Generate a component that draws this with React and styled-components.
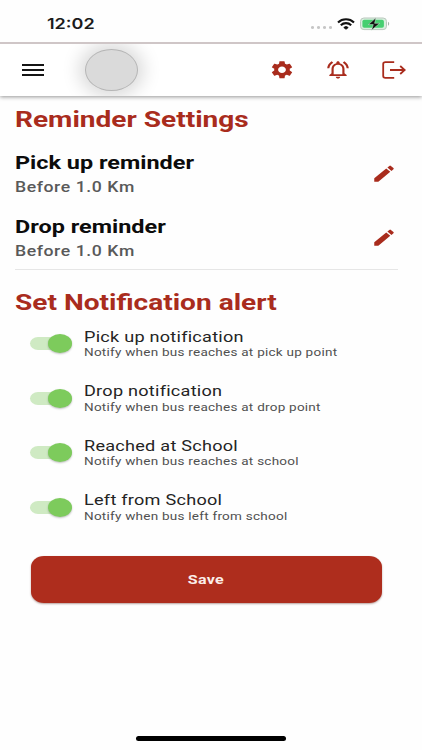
import styled, { createGlobalStyle } from "styled-components";
import {
  MdSettings,
  MdOutlineNotificationsActive,
  MdEdit,
} from "react-icons/md";

const RED = "#a92c1d";

const REMINDERS = [
  { title: "Pick up reminder", text: "Before 1.0 Km" },
  { title: "Drop reminder", text: "Before 1.0 Km" },
];

const ALERTS = [
  {
    title: "Pick up notification",
    text: "Notify when bus reaches at pick up point",
  },
  {
    title: "Drop notification",
    text: "Notify when bus reaches at drop point",
  },
  { title: "Reached at School", text: "Notify when bus reaches at school" },
  { title: "Left from School", text: "Notify when bus left from school" },
];

function WifiIcon() {
  return (
    <WifiSvg viewBox="0 0 18 12" preserveAspectRatio="none">
      <path d="M1 4.4a11.6 11.6 0 0 1 16 0" />
      <path d="M3.8 7.2a7.6 7.6 0 0 1 10.4 0" />
      <path d="M6.8 9.5a3.4 3.4 0 0 1 4.4 0L9 11.2z" fill="#111" strokeWidth="1" />
    </WifiSvg>
  );
}

function BatteryIcon() {
  return (
    <BatterySvg viewBox="0 0 30 14">
      <rect x="0.5" y="1" width="26" height="11.6" rx="3.4" fill="#d9efdf" stroke="#b9c8bd" />
      <rect x="2.4" y="2.8" width="21.5" height="8" rx="1.8" fill="#45cf70" />
      <path d="M28 4.8c1.6.8 1.6 3.2 0 4z" fill="#a5b5a9" />
      <path
        d="M16 0.8 8.4 7.6h4.9l-1.8 5.6 8.2-6.9h-5.1z"
        fill="#111"
        stroke="#d9f5e1"
        strokeWidth="0.5"
      />
    </BatterySvg>
  );
}

function LogoutIcon() {
  return (
    <LogoutSvg viewBox="0 0 24 18">
      <path d="M12.2 1.2H3.4Q1.2 1.2 1.2 3v12q0 1.8 2.2 1.8h8.8" />
      <path d="M8 9h14.5M18.2 5l4.5 4-4.5 4" />
    </LogoutSvg>
  );
}

function App() {
  return (
    <Screen>
      <GlobalStyle />
      <StatusBar>
        <Clock>12:02</Clock>
        <StatusIcons>
          <Signal>
            <i />
            <i />
            <i />
            <i />
          </Signal>
          <WifiIcon />
          <BatteryIcon />
        </StatusIcons>
      </StatusBar>
      <AppBar>
        <Menu>
          <span />
          <span />
          <span />
        </Menu>
        <Avatar />
        <Actions>
          <Icon as={MdSettings} preserveAspectRatio="none" />
          <Icon as={MdOutlineNotificationsActive} preserveAspectRatio="none" />
          <LogoutIcon />
        </Actions>
      </AppBar>
      <Content>
        <Heading>Reminder Settings</Heading>
        <Reminders>
          {REMINDERS.map((item) => (
            <Reminder key={item.title}>
              <div>
                <ReminderTitle>{item.title}</ReminderTitle>
                <ReminderText>{item.text}</ReminderText>
              </div>
              <Icon as={MdEdit} preserveAspectRatio="none" />
            </Reminder>
          ))}
        </Reminders>
        <Heading>Set Notification alert</Heading>
        <Alerts>
          {ALERTS.map((item) => (
            <Alert key={item.title}>
              <Switch>
                <Thumb />
              </Switch>
              <div>
                <AlertTitle>{item.title}</AlertTitle>
                <AlertText>{item.text}</AlertText>
              </div>
            </Alert>
          ))}
        </Alerts>
        <SaveButton>
          <SaveText>Save</SaveText>
        </SaveButton>
      </Content>
      <HomeIndicator />
    </Screen>
  );
}

export default App;

const GlobalStyle = createGlobalStyle`
  body {
    margin: 0;
    background: #fefefe;
  }
  * {
    box-sizing: border-box;
  }
`;

const Screen = styled.div`
  width: 422px;
  height: 750px;
  display: flex;
  flex-direction: column;
  overflow: hidden;
  background: #fefefe;
  font-family: Roboto, sans-serif;
`;

const StatusBar = styled.div`
  height: 44px;
  flex-shrink: 0;
  display: flex;
  justify-content: space-between;
  align-items: center;
  padding: 5px 32px 0 46.5px;
  border-bottom: 2px solid #cfc6c7;
`;

/* every label on the screen is drawn wider than the font's own shapes */
const Text = styled.div`
  width: max-content;
  white-space: nowrap;
  transform: scaleX(${({ $stretch }) => $stretch || 1.217});
  transform-origin: left center;
`;

const Clock = styled(Text)`
  font-family: Inter, sans-serif;
  font-weight: 600;
  font-size: 14.8px;
  line-height: 18px;
  color: #1b1b1b;
`;

const StatusIcons = styled.div`
  display: flex;
  align-items: center;
`;

const Signal = styled.div`
  display: flex;
  gap: 2.6px;
  margin: 8px 5px 0 0;
  i {
    width: 3.4px;
    height: 3px;
    border-radius: 50%;
    background: #c6c6c6;
  }
`;

const WifiSvg = styled.svg`
  width: 18px;
  height: 12px;
  margin-right: 5px;
  fill: none;
  stroke: #111;
  stroke-width: 2.1;
`;

const BatterySvg = styled.svg`
  width: 30px;
  height: 14px;
`;

const AppBar = styled.div`
  height: 52px;
  flex-shrink: 0;
  display: flex;
  align-items: center;
  padding: 0 16px 0 22px;
  background: #fff;
  box-shadow: 0 1px 4px rgba(0, 0, 0, 0.42);
  clip-path: inset(0 0 -8px 0);
`;

const Menu = styled.div`
  width: 22px;
  height: 12px;
  display: flex;
  flex-direction: column;
  justify-content: space-between;
  span {
    height: 1.8px;
    background: #151515;
  }
`;

const Avatar = styled.div`
  width: 53px;
  height: 42px;
  margin-left: 40.5px;
  border: 1px solid #b5b5b5;
  border-radius: 50%;
  background: #dadada;
  box-shadow: 0 0 18px 6px rgba(0, 0, 0, 0.15);
  clip-path: inset(-5px -40px);
`;

const Actions = styled.div`
  display: flex;
  align-items: center;
  gap: 30px;
  margin-left: auto;
`;

const Icon = styled.svg`
  width: 26px;
  height: 21.4px;
  color: ${RED};
`;

const LogoutSvg = styled.svg`
  width: 24px;
  height: 18px;
  margin-left: 1.5px;
  fill: none;
  stroke: ${RED};
  stroke-width: 1.8;
`;

const Content = styled.div`
  display: flex;
  flex-direction: column;
  padding: 7.5px 24px 0 14.5px;
`;

const Heading = styled(Text).attrs({ $stretch: 1.253 })`
  font-weight: 700;
  font-size: 22.4px;
  line-height: 30px;
  color: ${RED};
`;

const Reminders = styled.div`
  height: 136.5px;
  margin-bottom: 17px;
  padding-top: 13px;
  border-bottom: 1.5px solid #e6e6e6;
`;

const Reminder = styled.div`
  height: 64px;
  display: flex;
  justify-content: space-between;
  padding-right: 1px;
  svg {
    margin-top: 16px;
  }
`;

const ReminderTitle = styled(Text).attrs({ $stretch: 1.26 })`
  font-weight: 700;
  font-size: 18.6px;
  line-height: 26px;
  color: #0c0c0c;
  margin-top: 3px;
`;

const ReminderText = styled(Text).attrs({ $stretch: 1.26 })`
  font-weight: 500;
  font-size: 14px;
  line-height: 23px;
  letter-spacing: 0.45px;
  color: #595959;
`;

const Alerts = styled.div`
  padding: 10.5px 0 0 15.5px;
`;

const Alert = styled.div`
  height: 54.5px;
  display: flex;
  align-items: flex-start;
`;

const Switch = styled.div`
  width: 42px;
  height: 13px;
  flex-shrink: 0;
  display: flex;
  align-items: center;
  justify-content: flex-end;
  margin: 9.5px 11.5px 0 0;
  border-radius: 8px / 6.5px;
  background: #cfeac3;
`;

const Thumb = styled.div`
  width: 24px;
  height: 19px;
  flex-shrink: 0;
  border-radius: 50%;
  background: #7dcb5c;
  box-shadow: 0 1px 2px rgba(0, 0, 0, 0.25);
`;

const AlertTitle = styled(Text).attrs({ $stretch: 1.24 })`
  font-size: 14.6px;
  line-height: 19px;
  letter-spacing: 0.2px;
  color: #242424;
`;

const AlertText = styled(Text).attrs({ $stretch: 1.24 })`
  font-size: 10.9px;
  line-height: 12px;
  letter-spacing: 0.2px;
  margin-top: 0.9px;
  color: #505050;
`;

const SaveButton = styled.button`
  height: 47px;
  display: flex;
  align-items: center;
  justify-content: center;
  margin: 10.5px 16px 0;
  padding: 0;
  border: 0;
  border-radius: 13px / 11px;
  background: #ae2d1d;
  box-shadow: 0 1px 2px rgba(80, 20, 10, 0.4);
  font-family: inherit;
`;

const SaveText = styled(Text)`
  transform-origin: center;
  font-weight: 700;
  font-size: 13.2px;
  letter-spacing: 0.2px;
  color: #fbeeea;
`;

const HomeIndicator = styled.div`
  width: 150px;
  height: 5.5px;
  margin: auto auto 9px 136px;
  flex-shrink: 0;
  border-radius: 3px;
  background: #000;
`;
